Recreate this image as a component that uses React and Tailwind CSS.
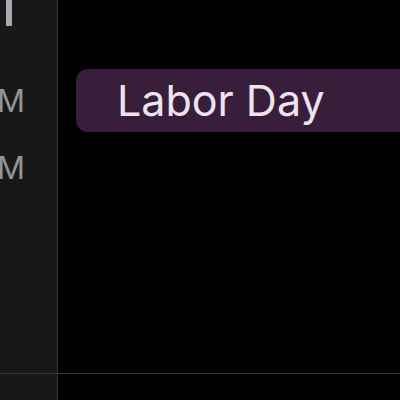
export default function App() {
  return (
    <div
      className="w-[400px] h-[400px] bg-black flex flex-col overflow-hidden"
      style={{ fontFamily: "Inter, 'Noto Sans', sans-serif" }}
    >
      <div className="flex flex-1 min-h-0">
        {/* hour labels column */}
        <div className="w-[58px] shrink-0 bg-[#18181a] border-r border-[#38383a] flex flex-col overflow-hidden">
          <div className="flex justify-end pr-[45px] h-[26px] items-end">
            <div className="w-[6px] h-[26px] bg-[#a9a9ad] shrink-0" />
          </div>
          <div className="flex justify-end pr-[32px] mt-[58px] text-[31px] leading-[34px] text-[#939398] whitespace-nowrap">
            <span className="shrink-0">PM</span>
          </div>
          <div className="flex justify-end pr-[32px] mt-[33px] text-[31px] leading-[34px] text-[#939398] whitespace-nowrap">
            <span className="shrink-0">PM</span>
          </div>
        </div>

        {/* day column */}
        <div className="flex-1 pt-[69px] pl-[18px]">
          <div className="h-[63px] w-[360px] rounded-[12px] bg-[#391e3c] flex items-center pl-[41px]">
            <span className="text-[43px] leading-none text-[#ece4ef] whitespace-nowrap">
              Labor Day
            </span>
          </div>
        </div>
      </div>
      <div className="h-[27px] shrink-0 flex border-t border-[#38383a]">
        <div className="w-[58px] bg-[#18181a] border-r border-[#38383a]" />
        <div className="flex-1" />
      </div>
    </div>
  );
}
